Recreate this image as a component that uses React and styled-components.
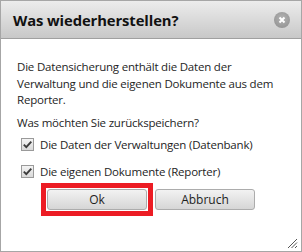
import styled, { createGlobalStyle } from 'styled-components'

const GlobalStyle = createGlobalStyle`
  html, body {
    margin: 0;
    padding: 0;
    background: #ffffff;
  }
  body {
    font-family: 'Open Sans', 'Liberation Sans', sans-serif;
    color: #1e1e1e;
  }
`

const CheckBox = ({ checked }) => (
  <S.Box>
    {checked && (
      <svg width="11" height="11" viewBox="0 0 11 11">
        <path
          d="M1.8 5.6 L4.3 8.1 L9.3 2.6"
          fill="none"
          stroke="#3c3c3c"
          strokeWidth="1.9"
        />
      </svg>
    )}
  </S.Box>
)

export default () => {
  const options = [
    { label: 'Die Daten der Verwaltungen (Datenbank)', checked: true },
    { label: 'Die eigenen Dokumente (Reporter)', checked: true },
  ]

  return (
    <>
      <GlobalStyle />
      <S.Window>
        <S.TitleBar>
          <S.Title>Was wiederherstellen?</S.Title>
          <S.Close>
            <svg width="8" height="8" viewBox="0 0 8 8">
              <path
                d="M1.5 1.5 L6.5 6.5 M6.5 1.5 L1.5 6.5"
                stroke="#ffffff"
                strokeWidth="2"
              />
            </svg>
          </S.Close>
        </S.TitleBar>
        <S.Body>
          <S.Text>
            Die Datensicherung enthält die Daten der
            <br />
            Verwaltung und die eigenen Dokumente aus dem Reporter.
          </S.Text>
          <S.Question>Was möchten Sie zurückspeichern?</S.Question>
          <S.Options>
            {options.map((option) => (
              <S.Option key={option.label}>
                <CheckBox checked={option.checked} />
                {option.label}
              </S.Option>
            ))}
          </S.Options>
          <S.Buttons>
            <S.Button highlighted>Ok</S.Button>
            <S.Button>Abbruch</S.Button>
          </S.Buttons>
          <S.Grip>
            <svg width="11" height="11" viewBox="0 0 11 11">
              <path
                d="M10 1 L1 10 M10 4.5 L4.5 10 M10 8 L8 10"
                stroke="#555555"
                strokeWidth="1"
              />
            </svg>
          </S.Grip>
        </S.Body>
      </S.Window>
    </>
  )
}

const S = {
  Window: styled.div`
    width: 302px;
    height: 252px;
    box-sizing: border-box;
    border: 1px solid #a6a6a6;
    display: flex;
    flex-direction: column;
    background: #ffffff;
  `,
  TitleBar: styled.div`
    height: 37px;
    flex: none;
    display: flex;
    align-items: center;
    justify-content: space-between;
    padding: 0 11px 0 12px;
    background: linear-gradient(#ececec, #c8c8c8);
    border-bottom: 1px solid #a0a0a0;
  `,
  Title: styled.div`
    font-size: 14.8px;
    font-weight: 700;
    color: #111111;
    letter-spacing: -0.1px;
  `,
  Close: styled.div`
    width: 16px;
    height: 16px;
    border-radius: 50%;
    background: radial-gradient(circle at 50% 40%, #b4b4b4, #8c8c8c);
    display: flex;
    align-items: center;
    justify-content: center;
  `,
  Body: styled.div`
    flex: 1;
    position: relative;
    padding: 20px 16px 0 16px;
    font-size: 11.5px;
    letter-spacing: -0.2px;
  `,
  Text: styled.p`
    margin: 0;
    line-height: 16.5px;
  `,
  Question: styled.p`
    margin: 6px 0 0 0;
    line-height: 16px;
  `,
  Options: styled.div`
    display: flex;
    flex-direction: column;
    gap: 10px;
    margin: 5px 0 0 4px;
  `,
  Option: styled.label`
    display: flex;
    align-items: center;
    gap: 6px;
    height: 17px;
  `,
  Box: styled.span`
    width: 11px;
    height: 11px;
    border: 1px solid #9a9a9a;
    background: linear-gradient(#f4f4f4, #d9d9d9);
    display: flex;
    align-items: center;
    justify-content: center;
  `,
  Buttons: styled.div`
    display: flex;
    justify-content: center;
    gap: 8px;
    margin-top: 9px;
  `,
  Button: styled.button`
    position: relative;
    width: 100px;
    height: 21px;
    box-sizing: border-box;
    border: 1px solid #acacac;
    border-radius: 3px;
    background: linear-gradient(#f2f2f2, #d6d6d6);
    font-family: inherit;
    font-size: 12px;
    color: #1e1e1e;
    padding: 0;

    &::before {
      content: '';
      display: ${(props) => (props.highlighted ? 'block' : 'none')};
      position: absolute;
      inset: -7px;
      border: 5px solid #ec1c24;
      pointer-events: none;
    }
  `,
  Grip: styled.div`
    position: absolute;
    right: 3px;
    bottom: 3px;
    width: 11px;
    height: 11px;
  `,
}
